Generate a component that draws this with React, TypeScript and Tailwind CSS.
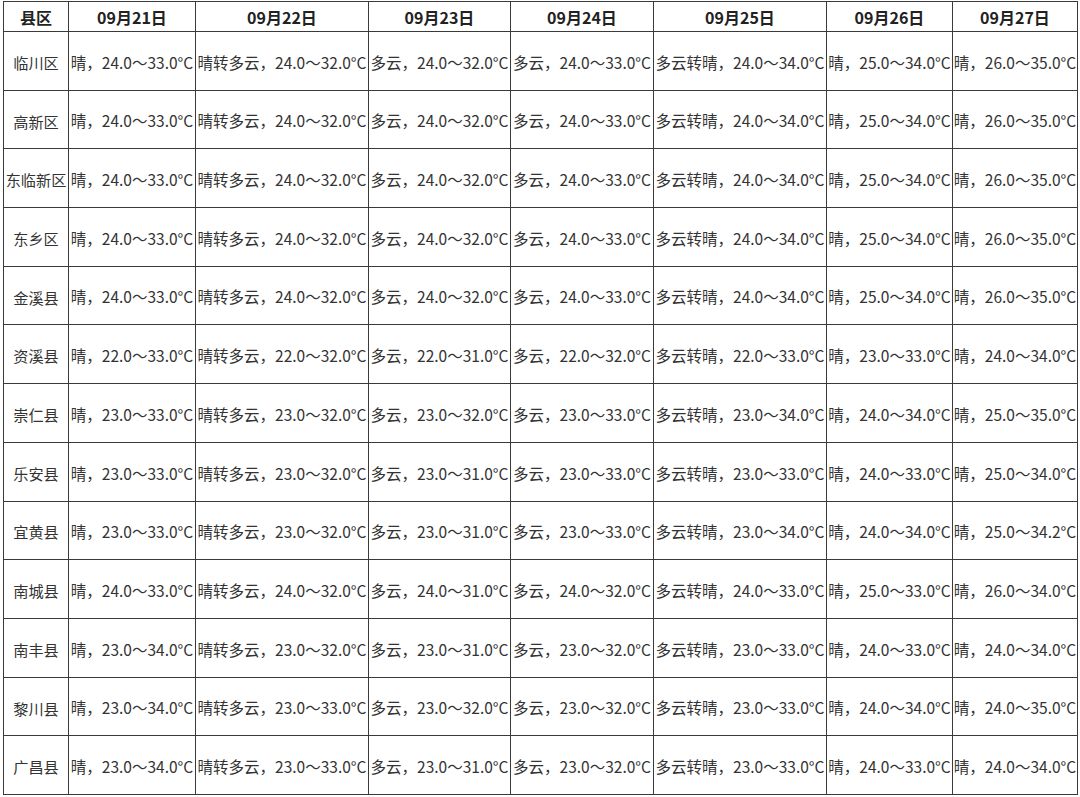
import React from "react";

const W = ["晴", "晴转多云", "多云", "多云", "多云转晴", "晴", "晴"];
const dates = ["09月21日", "09月22日", "09月23日", "09月24日", "09月25日", "09月26日", "09月27日"];
const widths = [65, 127, 173, 142, 143, 173, 126, 125];

const std = ["24.0～33.0", "24.0～32.0", "24.0～32.0", "24.0～33.0", "24.0～34.0", "25.0～34.0", "26.0～35.0"];

const rows: [string, string[]][] = [
  ["临川区", std],
  ["高新区", std],
  ["东临新区", std],
  ["东乡区", std],
  ["金溪县", std],
  ["资溪县", ["22.0～33.0", "22.0～32.0", "22.0～31.0", "22.0～32.0", "22.0～33.0", "23.0～33.0", "24.0～34.0"]],
  ["崇仁县", ["23.0～33.0", "23.0～32.0", "23.0～32.0", "23.0～33.0", "23.0～34.0", "24.0～34.0", "25.0～35.0"]],
  ["乐安县", ["23.0～33.0", "23.0～32.0", "23.0～31.0", "23.0～33.0", "23.0～33.0", "24.0～33.0", "25.0～34.0"]],
  ["宜黄县", ["23.0～33.0", "23.0～32.0", "23.0～31.0", "23.0～33.0", "23.0～34.0", "24.0～34.0", "25.0～34.2"]],
  ["南城县", ["24.0～33.0", "24.0～32.0", "24.0～31.0", "24.0～32.0", "24.0～33.0", "25.0～33.0", "26.0～34.0"]],
  ["南丰县", ["23.0～34.0", "23.0～32.0", "23.0～31.0", "23.0～32.0", "23.0～33.0", "24.0～33.0", "24.0～34.0"]],
  ["黎川县", ["23.0～34.0", "23.0～33.0", "23.0～32.0", "23.0～32.0", "23.0～33.0", "24.0～34.0", "24.0～35.0"]],
  ["广昌县", ["23.0～34.0", "23.0～33.0", "23.0～31.0", "23.0～32.0", "23.0～33.0", "24.0～33.0", "24.0～34.0"]],
];

export default function App() {
  return (
    <div
      className="w-[1080px] h-[797px] bg-white pl-[3px] pt-[1px] overflow-hidden"
      style={{ fontFamily: '"Noto Sans CJK SC", "Noto Sans", sans-serif' }}
    >
      <table className="table-fixed border-collapse w-[1075px] text-[15.5px] text-[#333]">
        <colgroup>
          {widths.map((w, i) => (
            <col key={i} style={{ width: w }} />
          ))}
        </colgroup>
        <thead>
          <tr className="h-[30px]">
            <th className="border border-[#3a3a3a] font-bold text-[16px] text-[#222] text-center p-0 pt-[1px] whitespace-nowrap">县区</th>
            {dates.map((d) => (
              <th key={d} className="border border-[#3a3a3a] font-bold text-[16px] text-[#222] text-center p-0 pt-[1px] whitespace-nowrap">
                {d}
              </th>
            ))}
          </tr>
        </thead>
        <tbody>
          {rows.map(([name, temps]) => (
            <tr key={name} className="h-[58.7px]">
              <td className="border border-[#3a3a3a] text-center p-0 pt-[3px] whitespace-nowrap text-[15.2px]">{name}</td>
              {temps.map((t, i) => (
                <td key={i} className="border border-[#3a3a3a] text-center p-0 pt-[3px] whitespace-nowrap overflow-visible">
                  {W[i]}，{t}°C
                </td>
              ))}
            </tr>
          ))}
        </tbody>
      </table>
    </div>
  );
}
